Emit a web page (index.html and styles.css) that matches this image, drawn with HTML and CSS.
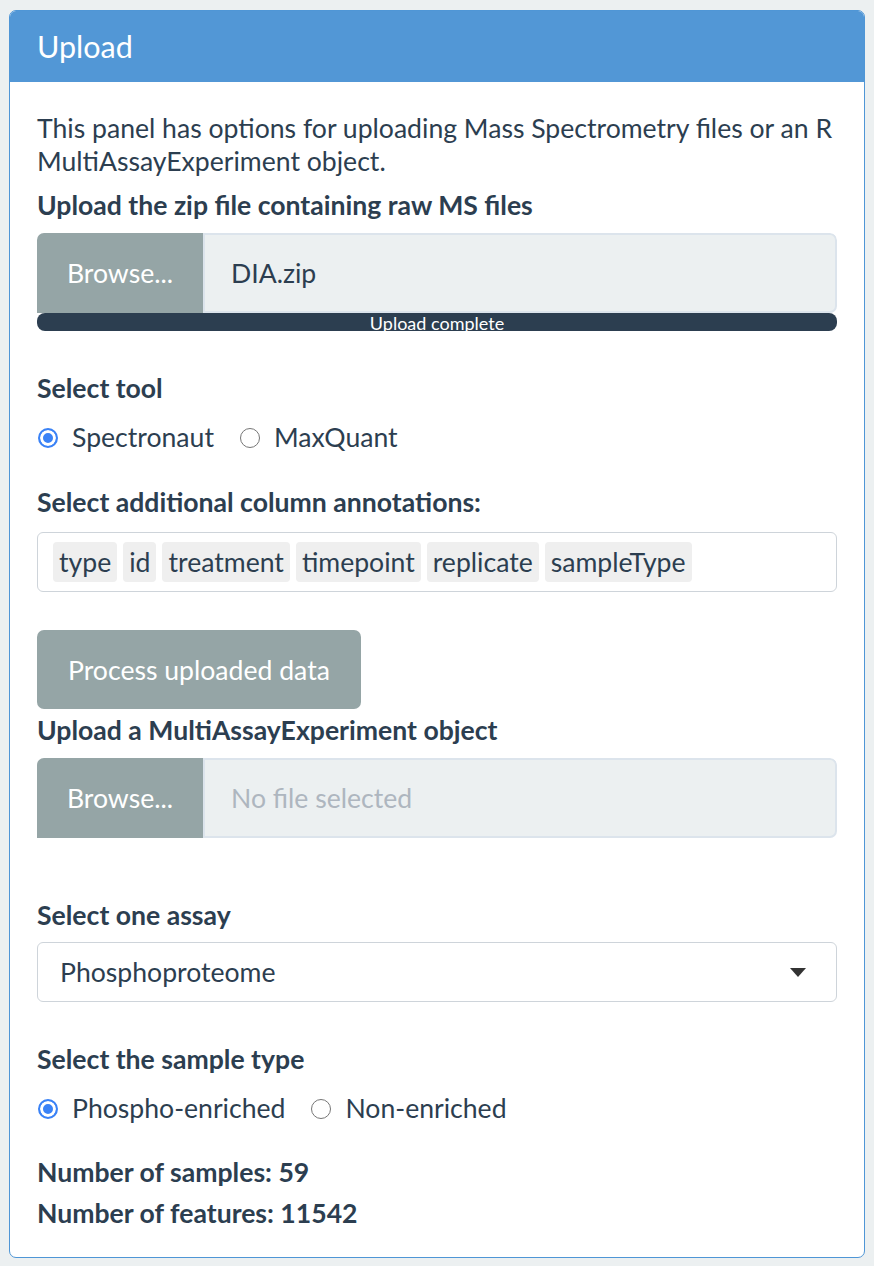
FILE: index.html
```html
<!DOCTYPE html>
<html>
<head>
<meta charset="utf-8">
<link rel="stylesheet" href="styles.css">
</head>
<body>
<div class="card">
  <div class="card-header">Upload</div>
  <div class="card-body">
    <p class="intro">This panel has options for uploading Mass Spectrometry files or an R MultiAssayExperiment object.</p>

    <div class="field">
      <label class="lbl">Upload the zip file containing raw MS files</label>
      <div class="file-group">
        <span class="browse">Browse...</span>
        <span class="file-name">DIA.zip</span>
      </div>
      <div class="progress">Upload complete</div>
    </div>

    <div class="field gap-top">
      <label class="lbl">Select tool</label>
      <div class="radios">
        <span class="radio-opt"><span class="radio checked"></span>Spectronaut</span>
        <span class="radio-opt"><span class="radio"></span>MaxQuant</span>
      </div>
    </div>

    <div class="field gap-top2">
      <label class="lbl lbl-sel">Select additional column annotations:</label>
      <div class="selectize">
        <span class="tag">type</span>
        <span class="tag">id</span>
        <span class="tag">treatment</span>
        <span class="tag">timepoint</span>
        <span class="tag">replicate</span>
        <span class="tag">sampleType</span>
      </div>
    </div>

    <button class="btn">Process uploaded data</button>

    <div class="field mae">
      <label class="lbl">Upload a MultiAssayExperiment object</label>
      <div class="file-group">
        <span class="browse">Browse...</span>
        <span class="file-name placeholder">No file selected</span>
      </div>
    </div>

    <div class="field assay">
      <label class="lbl">Select one assay</label>
      <div class="select">
        <span>Phosphoproteome</span>
        <span class="caret"></span>
      </div>
    </div>

    <div class="field gap-sample">
      <label class="lbl">Select the sample type</label>
      <div class="radios">
        <span class="radio-opt"><span class="radio checked"></span>Phospho-enriched</span>
        <span class="radio-opt"><span class="radio"></span>Non-enriched</span>
      </div>
    </div>

    <div class="stats">
      <div class="stat">Number of samples: 59</div>
      <div class="stat">Number of features: 11542</div>
    </div>
  </div>
</div>
</body>
</html>
```

FILE: styles.css
```css
html, body {
  margin: 0;
  padding: 0;
}
body {
  background: #ecf0f1;
  font-family: Lato, "Noto Sans", sans-serif;
  color: #2c3e50;
  font-size: 26.6px;
  line-height: 33px;
  padding: 10px 9px 8px 9px;
}
.card {
  background: #fff;
  border: 1px solid #4f96d6;
  border-radius: 7px;
  overflow: hidden;
}
.card-header {
  background: #5297d6;
  color: #fff;
  font-size: 30.5px;
  height: 71px;
  line-height: 70px;
  padding: 0 27px;
}
.card-body {
  padding: 30px 27px 27px 27px;
}
.intro {
  margin: 0 0 11px 0;
}
.field {
  display: flex;
  flex-direction: column;
}
.lbl {
  font-weight: bold;
  margin-bottom: 11px;
}
.lbl-sel {
  margin-bottom: 13px;
}
.file-group {
  display: flex;
  height: 80px;
  border-radius: 7px 7px 0 0;
  overflow: hidden;
}
.browse {
  background: #95a5a6;
  color: #fff;
  width: 166px;
  display: flex;
  align-items: center;
  justify-content: center;
  flex: none;
}
.file-name {
  flex: 1;
  background: #ecf0f1;
  border: 2px solid #dce4ec;
  display: flex;
  align-items: center;
  padding-left: 26px;
  border-radius: 0 7px 7px 0;
}
.placeholder {
  color: #aeb6bf;
}
.progress {
  background: #2c3e50;
  height: 18px;
  border-radius: 8px;
  color: #fff;
  font-size: 18px;
  line-height: 20px;
  text-align: center;
}
.gap-top {
  margin-top: 41px;
}
.radios {
  display: flex;
  gap: 25px;
  margin-top: 5px;
}
.radio-opt {
  display: flex;
  align-items: center;
}
.radio {
  width: 20px;
  height: 20px;
  border: 1.5px solid #767676;
  border-radius: 50%;
  margin-right: 14px;
  box-sizing: border-box;
  margin-left: 1px;
}
.radio.checked {
  border: 2px solid #3a82f6;
  background: #3a82f6;
  box-shadow: inset 0 0 0 3px #fff;
}
.gap-top2 {
  margin-top: 32px;
}
.selectize {
  border: 1px solid #ced4da;
  border-radius: 6px;
  height: 60px;
  box-sizing: border-box;
  display: flex;
  align-items: center;
  padding: 0 15px;
  gap: 6px;
}
.tag {
  background: #efefef;
  border-radius: 4px;
  padding: 0 6px;
  line-height: 40px;
}
.btn {
  margin-top: 38px;
  align-self: flex-start;
  background: #95a5a6;
  color: #fff;
  border: none;
  border-radius: 7px;
  font-family: inherit;
  font-size: 26.6px;
  height: 79px;
  padding: 0 31px;
}
.mae {
  margin-top: 5px;
}
.assay {
  margin-top: 61px;
}
.assay .lbl {
  margin-bottom: 10px;
}
.select {
  height: 60px;
  border: 1px solid #ced4da;
  border-radius: 6px;
  box-sizing: border-box;
  display: flex;
  align-items: center;
  justify-content: space-between;
  padding: 0 30px 0 22px;
}
.caret {
  width: 0;
  height: 0;
  border-left: 8px solid transparent;
  border-right: 8px solid transparent;
  border-top: 9px solid #333;
}
.gap-sample {
  margin-top: 41px;
}
.stats {
  margin-top: 31px;
  font-weight: bold;
}
.stat + .stat {
  margin-top: 8px;
}
```
